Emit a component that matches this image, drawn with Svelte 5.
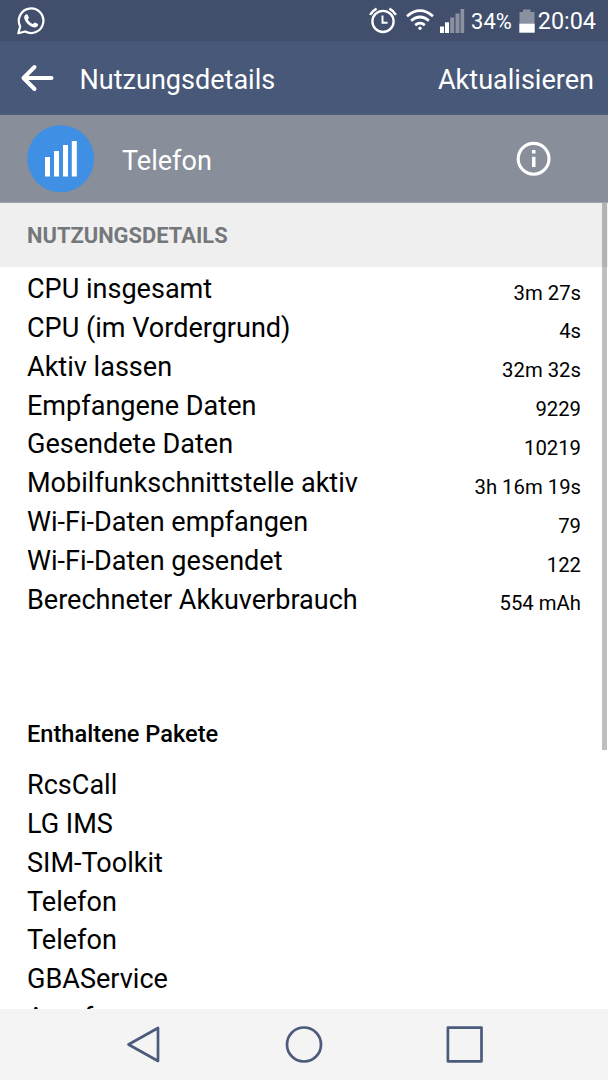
<script>
  const details = [
    { label: "CPU insgesamt", value: "3m 27s" },
    { label: "CPU (im Vordergrund)", value: "4s" },
    { label: "Aktiv lassen", value: "32m 32s" },
    { label: "Empfangene Daten", value: "9229" },
    { label: "Gesendete Daten", value: "10219" },
    { label: "Mobilfunkschnittstelle aktiv", value: "3h 16m 19s" },
    { label: "Wi-Fi-Daten empfangen", value: "79" },
    { label: "Wi-Fi-Daten gesendet", value: "122" },
    { label: "Berechneter Akkuverbrauch", value: "554 mAh" },
  ];

  const packages = [
    "RcsCall",
    "LG IMS",
    "SIM-Toolkit",
    "Telefon",
    "Telefon",
    "GBAService",
    "Anrufe",
  ];
</script>

<div class="screen">
  <div class="status-bar">
    <svg class="whatsapp" width="28" height="28" viewBox="0 0 28 28">
      <path d="M1.3 26.2 L3.2 19.4 A12.3 12.3 0 1 1 8.2 24.5 Z" fill="none" stroke="#fff" stroke-width="2.2" stroke-linejoin="round" />
      <path d="M8.2 8.1 C9.2 6.9 10.3 6.9 10.8 8 L11.8 10.4 C12 11.2 10.9 12 10.8 12.6 C11.9 14.7 13.5 16.2 15.8 17.1 C16.6 16.9 17.2 15.4 18 15.6 L20.6 16.8 C21.5 17.3 20.9 19 20 19.7 C17.8 21.2 14.6 20 12.2 18.3 C9.9 16.6 7.8 13.8 7.3 11.6 C7 10.2 7.3 9 8.2 8.1 Z" fill="#fff" />
    </svg>
    <div class="indicators">
      <svg class="alarm" width="28" height="28" viewBox="0 0 28 28" fill="none" stroke="#fff">
        <circle cx="14" cy="14.4" r="10.6" stroke-width="2.3" />
        <path d="M13.5 8.5 V15.7 H18.6" stroke-width="1.9" />
        <path d="M1.1 7.8 Q3.5 3.7 7.6 1.6 M20.4 1.6 Q24.5 3.7 26.9 7.8" stroke-width="2.4" />
      </svg>
      <svg class="wifi" width="28" height="22" viewBox="0 0 28 22" fill="none" stroke="#fff" stroke-width="2.7">
        <path d="M1 7.2 Q14 -4 27 7.2" />
        <path d="M5.1 11.7 Q14 4.3 22.9 11.7" />
        <path d="M9.2 16.1 Q14 12.2 18.8 16.1" />
        <circle cx="14" cy="19.2" r="1.7" fill="#fff" stroke="none" />
      </svg>
      <svg class="signal" width="25" height="24" viewBox="0 0 25 24" fill="#8a92a1">
        <rect x="0" y="17.5" width="4" height="6.5" fill="#fff" />
        <rect x="5" y="13.3" width="4" height="10.7" fill="#fff" />
        <rect x="10.2" y="8.5" width="4" height="15.5" />
        <rect x="15.5" y="4.5" width="4" height="19.5" />
        <rect x="20.5" y="0" width="3.7" height="24" />
      </svg>
      <span class="percent">34%</span>
      <svg class="battery" width="16" height="24" viewBox="0 0 16 24">
        <path d="M0.5 3 H4 V0.5 H11.5 V3 H15.5 V15 H0.5 Z" fill="#8a92a1" />
        <rect x="0.3" y="14.7" width="15.4" height="9" fill="#fff" />
      </svg>
      <span class="clock">20:04</span>
    </div>
  </div>

  <header class="app-bar">
    <svg class="back" width="34" height="28" viewBox="0 0 34 28" fill="none" stroke="#fff" stroke-width="4" stroke-linecap="round" stroke-linejoin="round">
      <path d="M14.5 3 L3.5 14 L14.5 25 M4 14 H31.5" />
    </svg>
    <h1>Nutzungsdetails</h1>
    <button class="refresh">Aktualisieren</button>
  </header>

  <div class="app-row">
    <svg class="app-icon" width="68" height="68" viewBox="0 0 68 68">
      <circle cx="33.7" cy="33.7" r="33.5" fill="#3f8fe5" />
      <g fill="#fff">
        <rect x="18" y="32" width="5" height="19.5" />
        <rect x="27" y="26" width="5" height="25.5" />
        <rect x="36" y="20" width="5" height="31.5" />
        <rect x="44.8" y="16" width="5" height="35.5" />
      </g>
    </svg>
    <span class="app-name">Telefon</span>
    <svg class="info" width="36" height="36" viewBox="0 0 36 36">
      <circle cx="18.6" cy="17.8" r="15.4" fill="none" stroke="#fff" stroke-width="3.1" />
      <rect x="17" y="9" width="3.5" height="3.5" fill="#fff" />
      <rect x="17" y="15.8" width="3.5" height="10.2" fill="#fff" />
    </svg>
  </div>

  <main>
    <h2>NUTZUNGSDETAILS</h2>
    <ul class="details">
      {#each details as item}
        <li>
          <span>{item.label}</span>
          <span class="value">{item.value}</span>
        </li>
      {/each}
    </ul>
    <h3>Enthaltene Pakete</h3>
    <ul class="packages">
      {#each packages as name}
        <li>{name}</li>
      {/each}
    </ul>
    <div class="scrollbar"></div>
  </main>

  <nav>
    <svg width="36" height="40" viewBox="0 0 36 40">
      <path d="M2.5 19.5 L32 3 V36 Z" />
    </svg>
    <svg width="40" height="40" viewBox="0 0 40 40">
      <circle cx="20" cy="19.5" r="17" />
    </svg>
    <svg width="40" height="40" viewBox="0 0 40 40">
      <rect x="2.9" y="2.7" width="33.6" height="33.6" />
    </svg>
  </nav>
</div>

<style>
  :global(body) {
    margin: 0;
  }
  .screen {
    width: 608px;
    height: 1080px;
    display: flex;
    flex-direction: column;
    overflow: hidden;
    background: #fff;
    color: #000;
    font-family: Roboto, sans-serif;
    font-size: 27.05px;
  }
  .status-bar {
    flex: none;
    height: 41px;
    box-sizing: border-box;
    padding: 0 12px 0 16.5px;
    display: flex;
    align-items: center;
    justify-content: space-between;
    background: #414f6d;
    color: #fff;
  }
  .indicators {
    display: flex;
    align-items: center;
  }
  .wifi {
    margin-left: 9.5px;
    margin-bottom: 2px;
  }
  .signal {
    margin-left: 6px;
  }
  .percent {
    margin-left: 6px;
    margin-top: 1px;
    font-size: 21.9px;
  }
  .battery {
    margin-left: 7px;
  }
  .clock {
    margin-left: 3px;
    margin-top: 1px;
    font-size: 23.4px;
  }
  .app-bar {
    flex: none;
    height: 74px;
    box-sizing: border-box;
    padding: 0 14px 0 20px;
    display: flex;
    align-items: center;
    background: #485878;
    border-bottom: 1px solid #50617f;
    color: #fff;
  }
  h1 {
    margin: 4px 0 0 25.5px;
    font-size: 27.05px;
    font-weight: 400;
  }
  .refresh {
    margin: 4px 0 0 auto;
    padding: 0;
    border: 0;
    background: none;
    color: inherit;
    font: inherit;
  }
  .app-row {
    flex: none;
    height: 88px;
    box-sizing: border-box;
    padding: 0 57px 0 27px;
    display: flex;
    align-items: center;
    background: #888e9a;
    border-bottom: 1px solid #9da2ac;
    color: #fff;
  }
  .app-name {
    margin: 4px auto 0 27px;
  }
  main {
    position: relative;
    flex: 1;
    min-height: 0;
    overflow: hidden;
  }
  h2 {
    margin: 0;
    height: 64px;
    padding-left: 27px;
    background: #efefef;
    color: #75787b;
    font-size: 21.9px;
    font-weight: 700;
    line-height: 65px;
  }
  ul {
    margin: 0;
    padding: 0 27px;
    list-style: none;
  }
  .details {
    padding-top: 3px;
  }
  li {
    display: flex;
    justify-content: space-between;
    height: 38.87px;
    line-height: 38.87px;
  }
  .value {
    padding-top: 3.6px;
    font-size: 20.3px;
  }
  h3 {
    margin: 0;
    padding: 94.6px 27px 11.7px;
    font-size: 23.6px;
    font-weight: 500;
    line-height: 40px;
  }
  .scrollbar {
    position: absolute;
    top: 0;
    right: 1px;
    width: 5px;
    height: 547px;
    background: rgba(0, 0, 0, 0.25);
  }
  nav {
    flex: none;
    height: 71px;
    box-sizing: border-box;
    padding: 0 123px 0 126px;
    display: flex;
    align-items: center;
    justify-content: space-between;
    background: #f4f4f4;
  }
  nav svg {
    fill: none;
    stroke: #4b5b7b;
    stroke-width: 2.7;
    stroke-linejoin: round;
  }
</style>
